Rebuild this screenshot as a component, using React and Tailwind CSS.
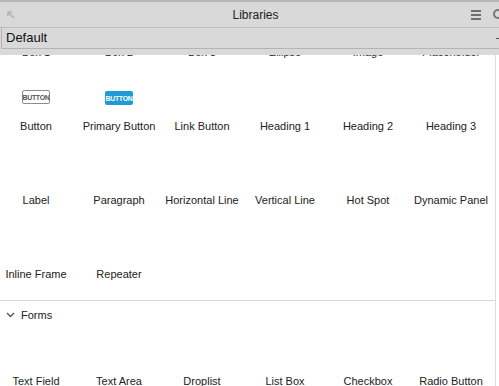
import React from "react";

const font = { fontFamily: '"Liberation Sans", Arial, sans-serif' };

function Cell({ label, icon }) {
  return (
    <div className="w-[72px] h-[74px] flex flex-col items-center">
      <div className="h-[44px] w-full flex items-center justify-center pt-[2px]">{icon}</div>
      <div className="h-[16px] leading-[16px] text-[11px] text-[#222] whitespace-nowrap">{label}</div>
    </div>
  );
}

function Row({ items }) {
  return (
    <div className="flex gap-[11px]">
      {items.map((it, i) => (
        <Cell key={i} label={it.label} icon={it.icon} />
      ))}
    </div>
  );
}

const btnIcon = (
  <div className="w-[28px] h-[14px] border border-[#8c8c8c] rounded-[2px] bg-white flex items-center justify-center text-[7px] font-bold text-[#555] leading-none tracking-[-0.3px]">
    BUTTON
  </div>
);
const primaryIcon = (
  <div className="w-[28px] h-[14px] rounded-[2px] bg-[#1e9ad6] flex items-center justify-center text-[7px] font-bold text-white leading-none tracking-[-0.3px] mt-[2px]">
    BUTTON
  </div>
);

export default function App() {
  return (
    <div className="w-[499px] h-[386px] overflow-hidden bg-white flex flex-col" style={font}>
      {/* top strip */}
      <div className="h-[2px] bg-[#b6b6b6] shrink-0" />
      {/* title bar */}
      <div className="h-[26px] shrink-0 bg-[#d9d9d9] border-b border-[#bdbdbd] flex items-center relative">
        <svg className="absolute left-[7px] top-[9px]" width="8" height="8" viewBox="0 0 8 8">
          <path d="M1 1 L7 7 M1 1 L5 1 M1 1 L1 5" stroke="#b2b2b2" strokeWidth="1.6" fill="none" />
        </svg>
        <div className="flex-1 text-center text-[12px] text-[#222] pl-[12px]">Libraries</div>
        <div className="absolute left-[471px] top-[8px] flex flex-col gap-[2px]">
          <div className="w-[10px] h-[2px] bg-[#6e6e6e]" />
          <div className="w-[10px] h-[2px] bg-[#6e6e6e]" />
          <div className="w-[10px] h-[2px] bg-[#6e6e6e]" />
        </div>
        <div className="absolute left-[493px] top-[7px] w-[10px] h-[10px] rounded-full border-2 border-[#777]" />
      </div>
      {/* dropdown */}
      <div className="h-[27px] shrink-0 bg-[#d9d9d9] relative">
        <div className="h-[21px] ml-[1px] border-l border-b border-[#b4b4b4] flex items-center pl-[4px] text-[13px] text-[#111]">
          Default
        </div>
        <div className="absolute left-[496px] top-[10px] w-[4px] h-[1px] bg-[#555]" />
      </div>
      {/* content */}
      <div className="flex-1 overflow-hidden flex">
        <div className="w-[496px] border-r border-[#dcdcdc] overflow-hidden">
          <div className="-mt-[55px]">
            <Row
              items={[
                { label: "Box 1" },
                { label: "Box 2" },
                { label: "Box 3" },
                { label: "Ellipse" },
                { label: "Image" },
                { label: "Placeholder" },
              ]}
            />
            <Row
              items={[
                { label: "Button", icon: btnIcon },
                { label: "Primary Button", icon: primaryIcon },
                { label: "Link Button" },
                { label: "Heading 1" },
                { label: "Heading 2" },
                { label: "Heading 3" },
              ]}
            />
            <Row
              items={[
                { label: "Label" },
                { label: "Paragraph" },
                { label: "Horizontal Line" },
                { label: "Vertical Line" },
                { label: "Hot Spot" },
                { label: "Dynamic Panel" },
              ]}
            />
            <Row items={[{ label: "Inline Frame" }, { label: "Repeater" }]} />
            <div className="h-[4px]" />
            <div className="border-t border-[#d6d6d6] h-[29px] flex items-center">
              <svg className="ml-[6px]" width="9" height="6" viewBox="0 0 9 6">
                <path d="M1 1 L4.5 4.5 L8 1" stroke="#555" strokeWidth="1.3" fill="none" />
              </svg>
              <span className="ml-[6px] text-[11px] text-[#222]">Forms</span>
            </div>
            <Row
              items={[
                { label: "Text Field" },
                { label: "Text Area" },
                { label: "Droplist" },
                { label: "List Box" },
                { label: "Checkbox" },
                { label: "Radio Button" },
              ]}
            />
          </div>
        </div>
      </div>
    </div>
  );
}
